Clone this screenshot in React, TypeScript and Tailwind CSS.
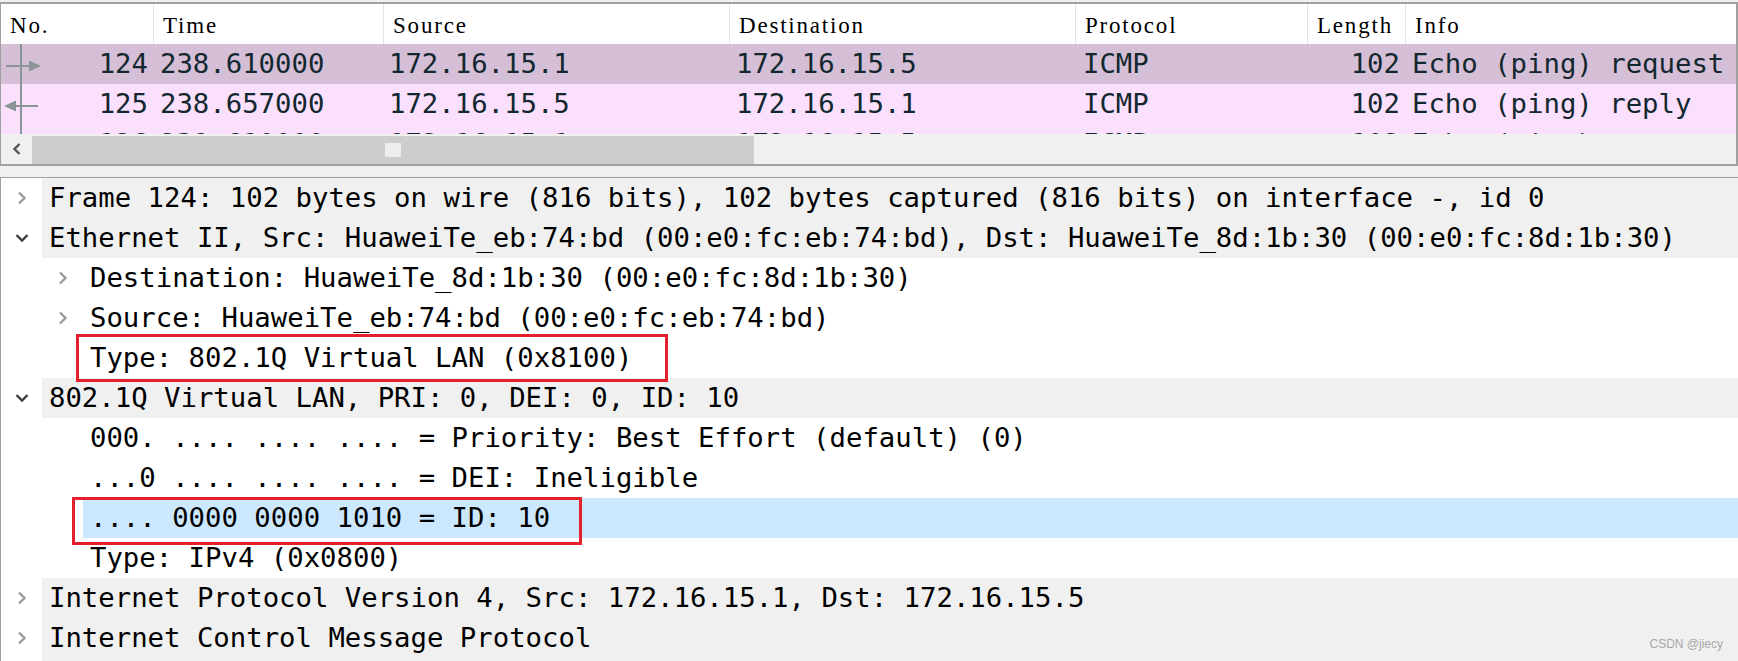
import React from "react";

const MONO = { fontFamily: '"DejaVu Sans Mono", monospace' };

type Pkt = { no: string; time: string; src: string; dst: string; proto: string; len: string; info: string; bg: string; arrow: "right" | "left" | "none" };

const packets: Pkt[] = [
  { no: "124", time: "238.610000", src: "172.16.15.1", dst: "172.16.15.5", proto: "ICMP", len: "102", info: "Echo (ping) request", bg: "bg-[#d5bfd7]", arrow: "right" },
  { no: "125", time: "238.657000", src: "172.16.15.5", dst: "172.16.15.1", proto: "ICMP", len: "102", info: "Echo (ping) reply", bg: "bg-[#fbe0fd]", arrow: "left" },
  { no: "126", time: "239.610000", src: "172.16.15.1", dst: "172.16.15.5", proto: "ICMP", len: "102", info: "Echo (ping) request", bg: "bg-[#fbe0fd]", arrow: "none" },
];

function ArrowMark({ kind }: { kind: "right" | "left" | "none" }) {
  return (
    <svg className="absolute left-0 top-0" width="45" height="40" viewBox="0 0 45 40">
      <line x1="20" y1="0" x2="20" y2="40" stroke="#8a9597" strokeWidth="2" />
      {kind === "right" && (
        <>
          <line x1="5" y1="22" x2="29" y2="22" stroke="#8a9597" strokeWidth="2" />
          <polygon points="28,16.5 40,22 28,27.5" fill="#8a9597" />
        </>
      )}
      {kind === "left" && (
        <>
          <line x1="14" y1="22" x2="37" y2="22" stroke="#8a9597" strokeWidth="2" />
          <polygon points="15,16.5 3,22 15,27.5" fill="#8a9597" />
        </>
      )}
    </svg>
  );
}

const cols = "grid grid-cols-[152px_230px_346px_346px_232px_98px_1fr]";

function PacketList() {
  const headers = ["No.", "Time", "Source", "Destination", "Protocol", "Length", "Info"];
  return (
    <div className="mt-[2px] border-t-2 border-l border-r-2 border-b-2 border-[#a0a0a0] bg-white flex flex-col">
      <div className={`${cols} h-[40px] bg-white`}>
        {headers.map((h, i) => (
          <div
            key={h}
            className={`pl-[9px] pt-[3px] text-[23px] tracking-[1.8px] text-black leading-[37px] whitespace-nowrap overflow-hidden ${i > 0 ? "border-l border-[#e3e3e3]" : ""}`}
            style={{ fontFamily: '"Liberation Serif", serif' }}
          >
            {h}
          </div>
        ))}
      </div>
      <div className="h-[90px] overflow-hidden">
        {packets.map((p) => (
          <div key={p.no} className={`${cols} h-[40px] ${p.bg} text-[#12272e] text-[27.3px] leading-[40px] whitespace-pre`} style={MONO}>
            <div className="relative text-right pr-[5px]">
              <ArrowMark kind={p.arrow} />
              <span className="relative">{p.no}</span>
            </div>
            <div className="pl-[7px] overflow-hidden">{p.time}</div>
            <div className="pl-[6px] overflow-hidden">{p.src}</div>
            <div className="pl-[7px] overflow-hidden">{p.dst}</div>
            <div className="pl-[8px] overflow-hidden">{p.proto}</div>
            <div className="text-right pr-[5px] overflow-hidden">{p.len}</div>
            <div className="pl-[7px] overflow-hidden">{p.info}</div>
          </div>
        ))}
      </div>
      <div className="h-[30px] flex bg-[#f0f0f0]">
        <div className="w-[31px] flex items-center justify-center">
          <svg width="12" height="14" viewBox="0 0 12 14">
            <polyline points="8.5,2 3.5,7 8.5,12" fill="none" stroke="#555" strokeWidth="2.4" />
          </svg>
        </div>
        <div className="flex-1 flex pt-[2px]">
          <div className="w-[722px] h-[28px] bg-[#cdcdcd] flex items-center justify-center">
            <div className="w-[16px] h-[14px] bg-[#eeeeee]" />
          </div>
        </div>
      </div>
    </div>
  );
}

type Row = { level: 0 | 1; state: "open" | "closed" | "none"; text: string; selected?: boolean; box?: "a" | "b" };

const rows: Row[] = [
  { level: 0, state: "closed", text: "Frame 124: 102 bytes on wire (816 bits), 102 bytes captured (816 bits) on interface -, id 0" },
  { level: 0, state: "open", text: "Ethernet II, Src: HuaweiTe_eb:74:bd (00:e0:fc:eb:74:bd), Dst: HuaweiTe_8d:1b:30 (00:e0:fc:8d:1b:30)" },
  { level: 1, state: "closed", text: "Destination: HuaweiTe_8d:1b:30 (00:e0:fc:8d:1b:30)" },
  { level: 1, state: "closed", text: "Source: HuaweiTe_eb:74:bd (00:e0:fc:eb:74:bd)" },
  { level: 1, state: "none", text: "Type: 802.1Q Virtual LAN (0x8100)", box: "a" },
  { level: 0, state: "open", text: "802.1Q Virtual LAN, PRI: 0, DEI: 0, ID: 10" },
  { level: 1, state: "none", text: "000. .... .... .... = Priority: Best Effort (default) (0)" },
  { level: 1, state: "none", text: "...0 .... .... .... = DEI: Ineligible" },
  { level: 1, state: "none", text: ".... 0000 0000 1010 = ID: 10", selected: true, box: "b" },
  { level: 1, state: "none", text: "Type: IPv4 (0x0800)" },
  { level: 0, state: "closed", text: "Internet Protocol Version 4, Src: 172.16.15.1, Dst: 172.16.15.5" },
  { level: 0, state: "closed", text: "Internet Control Message Protocol" },
];

function Chevron({ state }: { state: "open" | "closed" | "none" }) {
  if (state === "closed")
    return (
      <svg width="10" height="14" viewBox="0 0 10 14">
        <polyline points="2,1.5 7.5,7 2,12.5" fill="none" stroke="#9a9a9a" strokeWidth="2.4" />
      </svg>
    );
  if (state === "open")
    return (
      <svg width="14" height="10" viewBox="0 0 14 10">
        <polyline points="1.5,2 7,7.5 12.5,2" fill="none" stroke="#3c3c3c" strokeWidth="2.4" />
      </svg>
    );
  return null;
}

function DetailTree() {
  return (
    <div className="mt-[11px] flex-1 border-t border-l border-[#a0a0a0] bg-white flex flex-col overflow-hidden relative">
      {rows.map((r, i) => (
        <div key={i} className="flex h-[40px] shrink-0 relative">
          {r.level === 1 && <div className="w-[41px] shrink-0" />}
          <div className="w-[41px] shrink-0 flex items-center justify-center">
            <Chevron state={r.state} />
          </div>
          <div
            className={`flex-1 text-[27.3px] leading-[40px] text-black whitespace-pre ${
              r.level === 0 ? "bg-[#f0f0f0] pl-[7px]" : r.selected ? "bg-[#cce8ff] pl-[7px]" : "pl-[7px]"
            }`}
            style={MONO}
          >
            {r.text}
          </div>
          {r.box === "a" && <div className="absolute z-10 left-[75px] top-[-4px] w-[592px] h-[48px] border-[3px] border-[#e3202c]" />}
          {r.box === "b" && <div className="absolute z-10 left-[71px] top-[-1px] w-[510px] h-[48px] border-[3px] border-[#e3202c]" />}
        </div>
      ))}
      <div className="flex-1 flex">
        <div className="w-[41px]" />
        <div className="flex-1 bg-[#f0f0f0]" />
      </div>
    </div>
  );
}

export default function App() {
  return (
    <div className="w-[1738px] h-[661px] bg-[#f0f0f0] overflow-hidden flex flex-col relative">
      <PacketList />
      <DetailTree />
      <div
        className="absolute right-[15px] bottom-[8px] text-[12px] text-[#a8a8a8]"
        style={{ fontFamily: '"Liberation Sans", sans-serif' }}
      >
        CSDN @jiecy
      </div>
    </div>
  );
}
